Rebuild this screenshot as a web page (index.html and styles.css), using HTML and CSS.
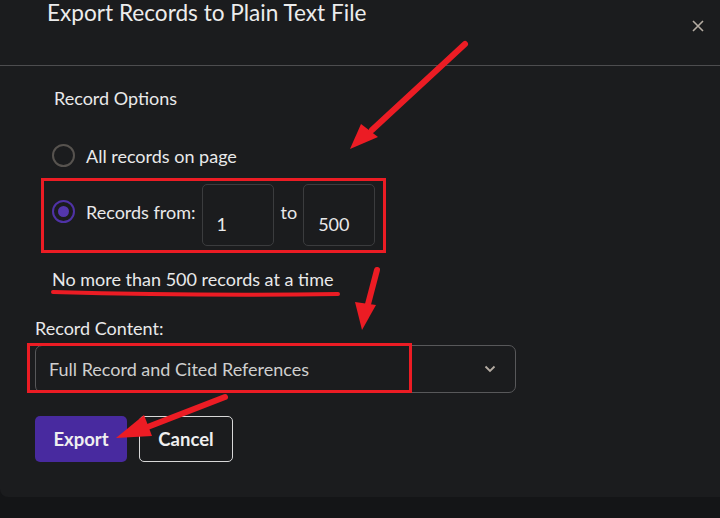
FILE: index.html
```html
<!DOCTYPE html>
<html>
<head>
<meta charset="utf-8">
<link rel="stylesheet" href="styles.css">
</head>
<body>
<div class="dialog">
  <div class="header">
    <h1 class="title">Export Records to Plain Text File</h1>
    <button class="close" aria-label="Close">
      <svg width="12" height="12" viewBox="0 0 12 12"><path d="M1 1L11 11M11 1L1 11" stroke="#b5aca3" stroke-width="1.6" fill="none"/></svg>
    </button>
  </div>
  <div class="body">
    <fieldset class="options">
      <legend class="legend">Record Options</legend>
      <label class="radio-row">
        <span class="radio"></span>
        <span class="radio-label">All records on page</span>
      </label>
      <label class="radio-row range-row">
        <span class="radio checked"><span class="dot"></span></span>
        <span class="radio-label">Records from:</span>
        <span class="num-input"><span class="num">1</span></span>
        <span class="to">to</span>
        <span class="num-input"><span class="num">500</span></span>
      </label>
      <p class="hint">No more than 500 records at a time</p>
    </fieldset>
    <div class="content-label">Record Content:</div>
    <div class="select">
      <span class="select-text">Full Record and Cited References</span>
      <svg class="chev" width="12" height="8" viewBox="0 0 12 8"><path d="M1.5 1.5L6 6L10.5 1.5" stroke="#b5aca3" stroke-width="1.8" fill="none"/></svg>
    </div>
    <div class="actions">
      <button class="btn primary">Export</button>
      <button class="btn secondary">Cancel</button>
    </div>
  </div>
</div>
<svg class="annot" width="720" height="518" viewBox="0 0 720 518">
  <g fill="none" stroke="#ec1c24" stroke-linecap="round">
    <rect x="42.5" y="179.5" width="342" height="72" stroke-width="3"/>
    <rect x="28.5" y="344.5" width="382" height="47" stroke-width="3"/>
    <path d="M53 292 Q200 296 338 294" stroke-width="4"/>
    <path d="M465 44 L372 130" stroke-width="6"/>
    <path d="M377 270 L367 308" stroke-width="6"/>
    <path d="M225 397 L145 428" stroke-width="6"/>
  </g>
  <g fill="#ec1c24">
    <polygon points="350,149 361,124 378,137"/>
    <polygon points="362,330 355,302 376,305"/>
    <polygon points="116,438 144,415 152,436"/>
  </g>
</svg>
</body>
</html>
```

FILE: styles.css
```css
* { box-sizing: border-box; }
html, body { margin: 0; padding: 0; }
body {
  width: 720px;
  height: 518px;
  overflow: hidden;
  background: #141517;
  font-family: "Lato", "Noto Sans", sans-serif;
  color: #e9e9ea;
  position: relative;
}
.dialog {
  width: 740px;
  height: 497px;
  background: #1b1c1e;
  border-bottom-left-radius: 8px;
}
.header {
  height: 66px;
  border-bottom: 1px solid #4d4d4f;
  position: relative;
  padding-left: 47px;
}
.title {
  margin: 0;
  font-size: 22.6px;
  font-weight: 400;
  line-height: 26px;
  color: #ececec;
}
.close {
  position: absolute;
  left: 691px;
  top: 19px;
  width: 14px;
  height: 14px;
  padding: 1px;
  border: 0;
  background: none;
  display: flex;
}
.body {
  padding: 20px 0 0 35px;
}
.options {
  border: 0;
  margin: 0;
  padding: 0 0 0 17px;
}
.legend {
  padding: 0 0 0 2px;
  font-size: 18px;
  line-height: 24px;
  margin-bottom: 0;
}
.radio-row {
  display: flex;
  align-items: center;
  margin-top: 34px;
  font-size: 18px;
}
.radio {
  width: 23px;
  height: 23px;
  border-radius: 50%;
  border: 2px solid #57534f;
  margin-right: 11px;
  display: flex;
  align-items: center;
  justify-content: center;
}
.radio.checked { border-color: #4f32a6; }
.dot {
  width: 11px;
  height: 11px;
  border-radius: 50%;
  background: #5436ad;
}
.range-row { margin-top: 10.5px; }
.num-input {
  width: 72px;
  height: 62px;
  border: 1px solid #3b3c3e;
  border-radius: 5px;
  margin: 6px 0 0 6px;
  display: flex;
  align-items: flex-end;
  padding: 0 0 10px 14px;
}
.to { margin: 0 0 0 7px; }
.hint {
  margin: 21px 0 0 0;
  font-size: 18px;
  line-height: 24px;
}
.content-label {
  margin-top: 25px;
  font-size: 18px;
  line-height: 24px;
}
.select {
  margin-top: 5px;
  width: 481px;
  height: 48px;
  border: 1px solid #58585a;
  border-radius: 7px;
  display: flex;
  align-items: center;
  justify-content: space-between;
  padding: 0 19px 0 13px;
}
.select-text {
  font-size: 18px;
  color: #cfcfcf;
}
.actions {
  display: flex;
  gap: 12px;
  margin-top: 23px;
}
.btn {
  height: 46px;
  border-radius: 5px;
  font-family: inherit;
  font-size: 18.5px;
  font-weight: 700;
  color: #efefef;
  padding: 0;
}
.primary {
  width: 92px;
  background: #482a9f;
  border: 0;
}
.secondary {
  width: 94px;
  background: transparent;
  border: 1px solid #d8d8d8;
}
.annot {
  position: absolute;
  left: 0;
  top: 0;
  pointer-events: none;
}
```
